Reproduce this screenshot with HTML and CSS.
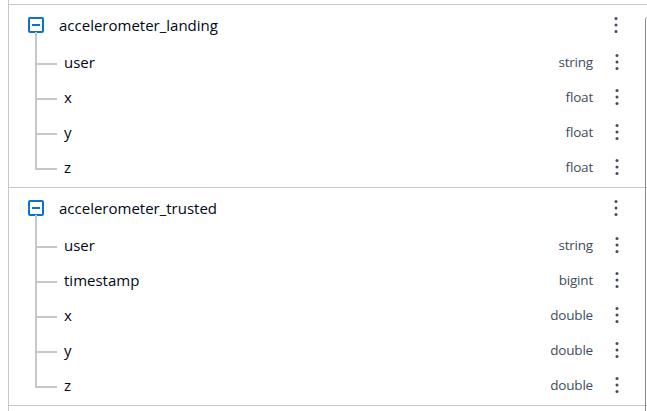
FILE: index.html
```html
<!DOCTYPE html>
<html lang="en">
<head>
<meta charset="utf-8">
<title>Schema tree</title>
<link rel="stylesheet" href="styles.css">
</head>
<body>
<div class="frame">
  <div class="tree">
    <section class="group">
      <div class="head">
        <span class="toggle"><span class="dash"></span></span>
        <span class="title">accelerometer_landing</span>
        <span class="kebab"><svg width="4" height="16" viewBox="0 0 4 16"><circle cx="2" cy="1.5" r="1.5"/><circle cx="2" cy="8" r="1.5"/><circle cx="2" cy="14.5" r="1.5"/></svg></span>
      </div>
      <ul class="cols">
        <li class="col"><span class="name">user</span><span class="type">string</span><span class="kebab"><svg width="4" height="16" viewBox="0 0 4 16"><circle cx="2" cy="1.5" r="1.5"/><circle cx="2" cy="8" r="1.5"/><circle cx="2" cy="14.5" r="1.5"/></svg></span></li>
        <li class="col"><span class="name">x</span><span class="type">float</span><span class="kebab"><svg width="4" height="16" viewBox="0 0 4 16"><circle cx="2" cy="1.5" r="1.5"/><circle cx="2" cy="8" r="1.5"/><circle cx="2" cy="14.5" r="1.5"/></svg></span></li>
        <li class="col"><span class="name">y</span><span class="type">float</span><span class="kebab"><svg width="4" height="16" viewBox="0 0 4 16"><circle cx="2" cy="1.5" r="1.5"/><circle cx="2" cy="8" r="1.5"/><circle cx="2" cy="14.5" r="1.5"/></svg></span></li>
        <li class="col"><span class="name">z</span><span class="type">float</span><span class="kebab"><svg width="4" height="16" viewBox="0 0 4 16"><circle cx="2" cy="1.5" r="1.5"/><circle cx="2" cy="8" r="1.5"/><circle cx="2" cy="14.5" r="1.5"/></svg></span></li>
      </ul>
    </section>
    <section class="group">
      <div class="head">
        <span class="toggle"><span class="dash"></span></span>
        <span class="title">accelerometer_trusted</span>
        <span class="kebab"><svg width="4" height="16" viewBox="0 0 4 16"><circle cx="2" cy="1.5" r="1.5"/><circle cx="2" cy="8" r="1.5"/><circle cx="2" cy="14.5" r="1.5"/></svg></span>
      </div>
      <ul class="cols">
        <li class="col"><span class="name">user</span><span class="type">string</span><span class="kebab"><svg width="4" height="16" viewBox="0 0 4 16"><circle cx="2" cy="1.5" r="1.5"/><circle cx="2" cy="8" r="1.5"/><circle cx="2" cy="14.5" r="1.5"/></svg></span></li>
        <li class="col"><span class="name">timestamp</span><span class="type">bigint</span><span class="kebab"><svg width="4" height="16" viewBox="0 0 4 16"><circle cx="2" cy="1.5" r="1.5"/><circle cx="2" cy="8" r="1.5"/><circle cx="2" cy="14.5" r="1.5"/></svg></span></li>
        <li class="col"><span class="name">x</span><span class="type">double</span><span class="kebab"><svg width="4" height="16" viewBox="0 0 4 16"><circle cx="2" cy="1.5" r="1.5"/><circle cx="2" cy="8" r="1.5"/><circle cx="2" cy="14.5" r="1.5"/></svg></span></li>
        <li class="col"><span class="name">y</span><span class="type">double</span><span class="kebab"><svg width="4" height="16" viewBox="0 0 4 16"><circle cx="2" cy="1.5" r="1.5"/><circle cx="2" cy="8" r="1.5"/><circle cx="2" cy="14.5" r="1.5"/></svg></span></li>
        <li class="col"><span class="name">z</span><span class="type">double</span><span class="kebab"><svg width="4" height="16" viewBox="0 0 4 16"><circle cx="2" cy="1.5" r="1.5"/><circle cx="2" cy="8" r="1.5"/><circle cx="2" cy="14.5" r="1.5"/></svg></span></li>
      </ul>
    </section>
  </div>
  <div class="scrollbar"></div>
</div>
</body>
</html>
```

FILE: styles.css
```css
* { box-sizing: border-box; }
html, body { margin: 0; padding: 0; background: #ffffff; }
body {
  font-family: "Open Sans", "Noto Sans", Arial, sans-serif;
  font-size: 14px;
  color: #000716;
  padding-left: 8px;
  height: 411px;
  overflow: hidden;
}
.frame {
  position: relative;
  height: 411px;
  border-left: 1px solid #c6c6cd;
  padding-top: 4px;
}
.tree {
  border-top: 1px solid #c6c6cd;
}
.group {
  border-bottom: 1px solid #c6c6cd;
  padding-bottom: 3px;
}
.head {
  display: flex;
  align-items: center;
  height: 39px;
  padding-left: 19px;
  padding-right: 21px;
}
.toggle {
  width: 16px;
  height: 16px;
  border: 2px solid #0972d3;
  border-radius: 2px;
  display: flex;
  align-items: center;
  justify-content: center;
  flex: none;
}
.dash {
  width: 8px;
  height: 2px;
  background: #0972d3;
}
.title {
  flex: 1;
  margin-left: 15px;
  font-size: 15px;
}
.cols {
  list-style: none;
  margin: 0;
  padding: 0;
  position: relative;
}
.col {
  position: relative;
  display: flex;
  align-items: center;
  height: 35px;
  padding-left: 55px;
  padding-right: 20px;
}
.col::before {
  content: "";
  position: absolute;
  left: 26px;
  top: 0;
  width: 20px;
  height: calc(50% + 1px);
  border-left: 2px solid #c6c6cd;
  border-bottom: 2px solid #c6c6cd;
}
.col:not(:last-child)::after {
  content: "";
  position: absolute;
  left: 26px;
  top: 50%;
  height: 50%;
  border-left: 2px solid #c6c6cd;
}
.cols::before {
  content: "";
  position: absolute;
  left: 26px;
  top: -12px;
  height: 12px;
  border-left: 2px solid #c6c6cd;
}
.name {
  flex: 1;
  font-size: 15px;
}
.type {
  font-size: 13.5px;
  letter-spacing: -0.2px;
  color: #414d5c;
}
.kebab {
  width: 20px;
  display: flex;
  justify-content: center;
  margin-left: 14px;
  flex: none;
}
.kebab svg { fill: #414d5c; display: block; }
.scrollbar {
  position: absolute;
  left: 636px;
  top: 17px;
  bottom: 0;
  width: 4px;
  border-left: 1px solid #8a8a8a;
  border-top-left-radius: 3px;
}
```
